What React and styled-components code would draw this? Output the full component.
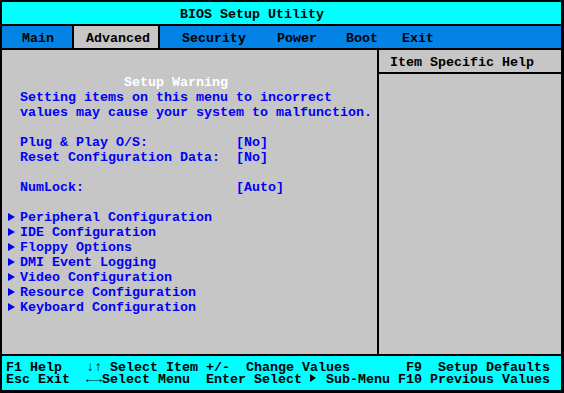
import React from 'react';
import styled, { createGlobalStyle } from 'styled-components';

const GlobalStyle = createGlobalStyle`
  *, *::before, *::after {
    box-sizing: border-box;
  }
  html, body {
    margin: 0;
    padding: 0;
    background: #ffffff;
  }
`;

const Screen = styled.div`
  width: 564px;
  height: 393px;
  display: flex;
  flex-direction: column;
  border-style: solid;
  border-color: #000;
  border-width: 2px 3px 3px 2px;
  font-family: 'Liberation Mono', 'DejaVu Sans Mono', monospace;
  font-weight: bold;
  font-size: 13.33px;
  line-height: 15px;
  color: #000;
  background: #c6c6c6;
`;

const TitleBar = styled.div`
  flex: 0 0 24px;
  padding: 5px 0 0 178px;
  background: #00ffff;
  border-bottom: 2px solid #000;
  white-space: pre;
`;

const MenuBar = styled.nav`
  flex: 0 0 24px;
  display: flex;
  padding-left: 20px;
  background: #0383e6;
  border-bottom: 2px solid #000;
`;

const MenuItem = styled.div`
  margin-left: ${(p) => p.$gap || 0}px;
  padding: 5px ${(p) => (p.$active ? '8px' : '0')} 0 ${(p) => (p.$active ? '12px' : '0')};
  background: ${(p) => (p.$active ? '#c6c6c6' : 'transparent')};
  border-left: ${(p) => (p.$active ? '2px solid #000' : 'none')};
  border-right: ${(p) => (p.$active ? '2px solid #000' : 'none')};
`;

const Body = styled.main`
  flex: 1;
  display: flex;
  min-height: 0;
`;

const LeftPanel = styled.section`
  flex: 0 0 377px;
  padding: 25px 0 0 18px;
  border-right: 2px solid #000;
  color: #0000f8;
`;

const RightPanel = styled.aside`
  flex: 1;
  display: flex;
  flex-direction: column;
`;

const HelpHeader = styled.div`
  flex: 0 0 24px;
  padding: 5px 0 0 11px;
  border-bottom: 2px solid #000;
  color: #000;
`;

const Group = styled.div`
  margin-bottom: 15px;
`;

const WarningTitle = styled.div`
  padding-left: 104px;
  color: #ffffff;
`;

const Line = styled.div`
  white-space: pre;
`;

const SettingRow = styled.div`
  display: grid;
  grid-template-columns: 216px auto;
  white-space: pre;
`;

const SubMenuItem = styled.div`
  margin-left: -12px;
  white-space: pre;
`;

const Arrow = styled.span`
  display: inline-block;
  width: 0;
  height: 0;
  border-left: ${(p) => p.$w || 7}px solid currentColor;
  border-top: ${(p) => p.$h || 4.5}px solid transparent;
  border-bottom: ${(p) => p.$h || 4.5}px solid transparent;
  margin-right: ${(p) => p.$mr || 5}px;
  vertical-align: ${(p) => p.$lift || 0}px;
`;

const Footer = styled.footer`
  flex: 0 0 36px;
  padding: 6px 0 0 4px;
  background: #00ffff;
  border-top: 2px solid #000;
  line-height: 12px;
  white-space: pre;
`;

const menus = [
  { label: 'Main', gap: 0 },
  { label: 'Advanced', gap: 18, active: true },
  { label: 'Security', gap: 22 },
  { label: 'Power', gap: 31 },
  { label: 'Boot', gap: 29 },
  { label: 'Exit', gap: 24 },
];

const subMenus = [
  'Peripheral Configuration',
  'IDE Configuration',
  'Floppy Options',
  'DMI Event Logging',
  'Video Configuration',
  'Resource Configuration',
  'Keyboard Configuration',
];

const App = () => {
  return (
    <>
      <GlobalStyle />
      <Screen>
        <TitleBar>BIOS Setup Utility</TitleBar>
        <MenuBar>
          {menus.map((m) => (
            <MenuItem key={m.label} $gap={m.gap} $active={m.active}>
              {m.label}
            </MenuItem>
          ))}
        </MenuBar>
        <Body>
          <LeftPanel>
            <Group>
              <WarningTitle>Setup Warning</WarningTitle>
              <Line>Setting items on this menu to incorrect</Line>
              <Line>values may cause your system to malfunction.</Line>
            </Group>
            <Group>
              <SettingRow>
                <span>Plug &amp; Play O/S:</span>
                <span>[No]</span>
              </SettingRow>
              <SettingRow>
                <span>Reset Configuration Data:</span>
                <span>[No]</span>
              </SettingRow>
            </Group>
            <Group>
              <SettingRow>
                <span>NumLock:</span>
                <span>[Auto]</span>
              </SettingRow>
            </Group>
            {subMenus.map((s) => (
              <SubMenuItem key={s}>
                <Arrow />
                {s}
              </SubMenuItem>
            ))}
          </LeftPanel>
          <RightPanel>
            <HelpHeader>Item Specific Help</HelpHeader>
          </RightPanel>
        </Body>
        <Footer>
          <div>{'F1 Help   \u2193\u2191 Select Item +/-  Change Values       F9  Setup Defaults'}</div>
          <div>
            {'Esc Exit  \u2190\u2192Select Menu  Enter Select '}
            <Arrow $w={6} $h={4} $mr={2} $lift={1} />
            {' Sub-Menu F10 Previous Values'}
          </div>
        </Footer>
      </Screen>
    </>
  );
};

export default App;
